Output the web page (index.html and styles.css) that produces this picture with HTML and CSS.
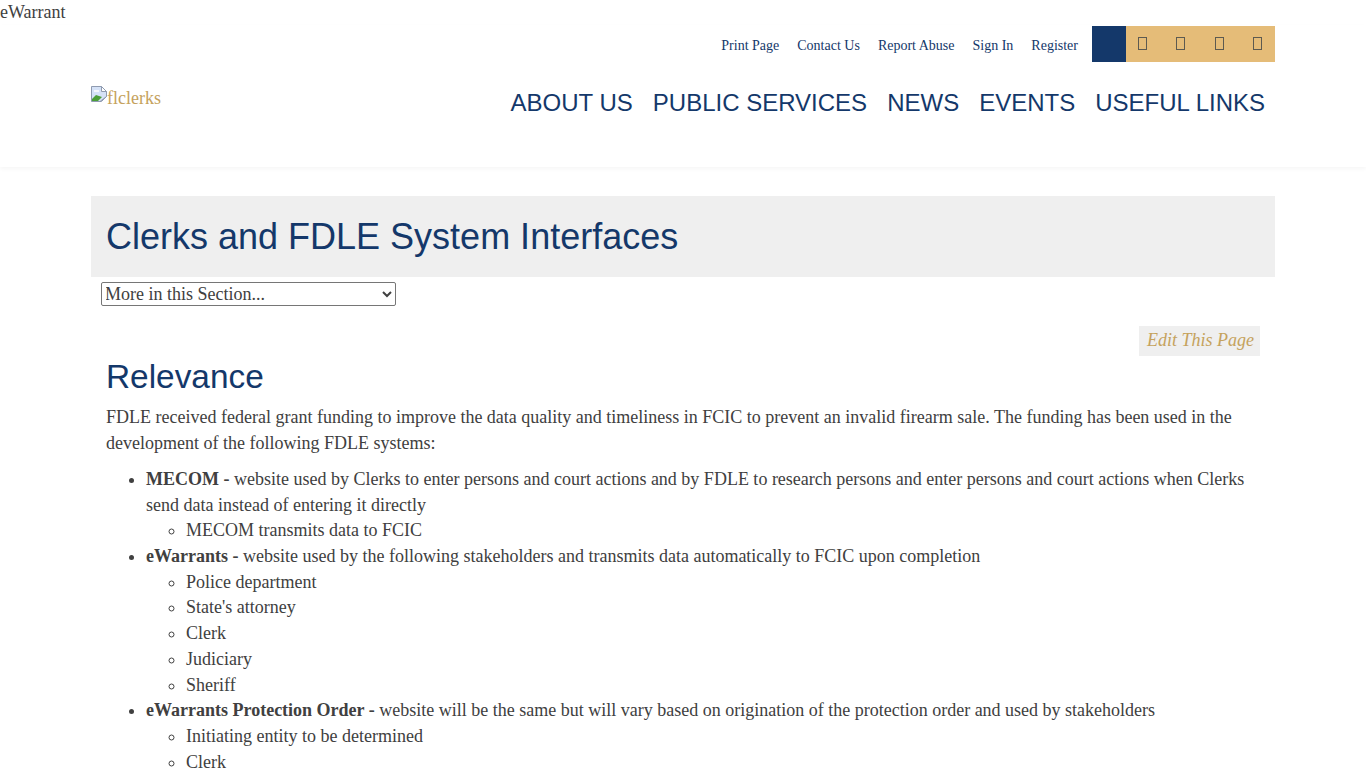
FILE: index.html
```html
<!DOCTYPE html>
<html lang="en">
<head>
<meta charset="utf-8">
<title>Clerks and FDLE System Interfaces</title>
<link rel="stylesheet" href="styles.css">
</head>
<body>
<div class="site-title">eWarrant</div>
<header class="header">
  <div class="wrap header-inner">
    <div class="top-row">
      <nav class="util-links">
        <a href="#">Print Page</a>
        <a href="#">Contact Us</a>
        <a href="#">Report Abuse</a>
        <a href="#">Sign In</a>
        <a href="#">Register</a>
      </nav>
      <div class="social">
        <span class="social-blue"></span>
        <div class="social-gold">
          <span class="tofu"></span>
          <span class="tofu"></span>
          <span class="tofu"></span>
          <span class="tofu"></span>
        </div>
      </div>
    </div>
    <div class="main-row">
      <a class="logo" href="#">
        <svg class="broken" width="16" height="16" viewBox="0 0 16 16">
          <path d="M.5.5h10l5 5v5l-5 5H.5z" fill="#d5e2f7" stroke="#8f9bb0"/>
          <path d="M10.5.5v5h5z" fill="#fff" stroke="#8f9bb0"/>
          <path d="M1 15v-2l4-4 3 1 3 1-4 4z" fill="#4c9f38"/>
          <path d="M3 4h5v2H3z" fill="#f4f7fc"/>
          <path d="M9 15.5l6.500-5" fill="none" stroke="#8f9bb0"/>
        </svg><span>flclerks</span>
      </a>
      <nav class="main-nav">
        <a href="#">ABOUT US</a>
        <a href="#">PUBLIC SERVICES</a>
        <a href="#">NEWS</a>
        <a href="#">EVENTS</a>
        <a href="#">USEFUL LINKS</a>
      </nav>
    </div>
  </div>
</header>
<main class="wrap">
  <div class="page-title"><h1>Clerks and FDLE System Interfaces</h1></div>
  <div class="section-select">
    <select class="select"><option>More in this Section...</option></select>
  </div>
  <article class="content">
    <div class="edit-row"><a class="edit" href="#">Edit This Page</a></div>
    <h2>Relevance</h2>
    <p>FDLE received federal grant funding to improve the data quality and timeliness in FCIC to prevent an invalid firearm sale. The funding has been used in the development of the following FDLE systems:</p>
    <ul>
      <li><strong>MECOM -</strong> website used by Clerks to enter persons and court actions and by FDLE to research persons and enter persons and court actions when Clerks send data instead of entering it directly
        <ul><li>MECOM transmits data to FCIC</li></ul>
      </li>
      <li><strong>eWarrants -</strong> website used by the following stakeholders and transmits data automatically to FCIC upon completion
        <ul>
          <li>Police department</li>
          <li>State's attorney</li>
          <li>Clerk</li>
          <li>Judiciary</li>
          <li>Sheriff</li>
        </ul>
      </li>
      <li><strong>eWarrants Protection Order -</strong> website will be the same but will vary based on origination of the protection order and used by stakeholders
        <ul>
          <li>Initiating entity to be determined</li>
          <li>Clerk</li>
        </ul>
      </li>
    </ul>
  </article>
</main>
</body>
</html>
```
FILE: styles.css
```css
* { box-sizing: border-box; }
html, body { margin: 0; padding: 0; }
body {
  font-family: "Liberation Serif", "Times New Roman", serif;
  font-size: 18px;
  line-height: 25.71px;
  color: #404040;
  background: #fff;
}
a { text-decoration: none; }
.site-title { height: 25px; line-height: 25px; }
.wrap { width: 1184px; margin: 0 auto; }
.header {
  height: 142px;
  box-shadow: 0 2px 4px rgba(0, 0, 0, 0.04);
}
.top-row {
  display: flex;
  justify-content: flex-end;
  align-items: flex-start;
  padding-top: 1px;
  gap: 14px;
}
.util-links { display: flex; gap: 18px; font-size: 14px; line-height: 36px; padding-top: 2px; }
.util-links a { color: #14386a; }
.social { display: flex; height: 36px; width: 183px; }
.social-blue { width: 34px; background: #14386a; }
.social-gold {
  flex: 1;
  background: #e5bc78;
  display: flex;
  align-items: center;
  justify-content: space-between;
  padding: 0 13px 0 12px;
}
.tofu {
  width: 9px;
  height: 13px;
  border: 1px solid #5d5a50;
  margin-top: -1px;
}
.main-row {
  display: flex;
  justify-content: space-between;
  align-items: flex-start;
  padding-top: 21px;
}
.logo {
  color: #c5a25d;
  display: flex;
  align-items: flex-end;
  line-height: 20px;
  margin-top: 1px;
}
.broken { margin-bottom: 6px; }
.main-nav {
  display: flex;
  gap: 20px;
  padding-right: 10px;
  font-family: "Liberation Sans", Arial, sans-serif;
  font-size: 24px;
  line-height: 36px;
}
.main-nav a { color: #14386a; }
.page-title {
  margin-top: 29px;
  height: 81px;
  background: #efefef;
  padding: 0 15px;
  display: flex;
  align-items: center;
}
h1, h2 {
  font-family: "Liberation Sans", Arial, sans-serif;
  font-weight: 400;
  color: #14386a;
  margin: 0;
}
h1 { font-size: 36px; line-height: 40px; }
h2 { font-size: 33.4px; line-height: 38px; margin: 2px 0 9px; }
.section-select { padding: 5px 10px 0; height: 29px; }
.select {
  display: block;
  width: 295px;
  height: 24px;
  font-family: inherit;
  font-size: 18px;
  color: #404040;
  background: #fff;
  border: 1px solid #767676;
  border-radius: 2px;
  text-indent: -1px;
}
.content { padding: 20px 15px 0; }
.edit-row { display: flex; justify-content: flex-end; height: 30px; }
.edit {
  background: #efefef;
  color: #c5a25d;
  font-style: italic;
  padding: 0 6px 0 8px;
  line-height: 29px;
}
p { margin: 0 0 10.5px; }
ul { margin: 0; padding-left: 40px; }
li ul { padding-left: 40px; }
strong { font-weight: 700; }
```
